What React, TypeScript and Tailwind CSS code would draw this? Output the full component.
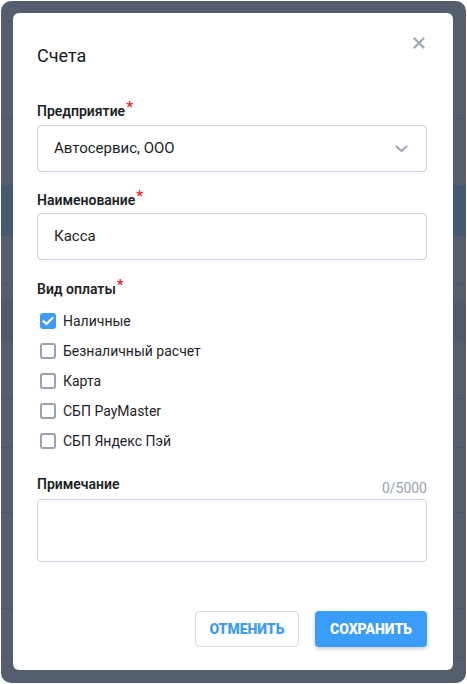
import React from "react";

const font = { fontFamily: "Roboto, 'Noto Sans', sans-serif" };

function Label({ text, required }: { text: string; required?: boolean }) {
  return (
    <div className="flex items-start h-[20px] text-[14px] font-semibold text-[#1b1f26] leading-[20px]">
      <span>{text}</span>
      {required && <span className="text-[#f5222d] text-[15px] leading-[12px] ml-[1px] font-bold">*</span>}
    </div>
  );
}

function Check({ label, checked }: { label: string; checked?: boolean }) {
  return (
    <div className="flex items-center h-[30px] pl-[3px]">
      {checked ? (
        <div className="w-[16px] h-[16px] rounded-[3px] bg-[#3d9bf6] flex items-center justify-center">
          <svg width="12" height="10" viewBox="0 0 12 10" fill="none">
            <path d="M1.5 5.2 L4.5 8 L10.5 2" stroke="white" strokeWidth="2.2" strokeLinecap="round" strokeLinejoin="round" />
          </svg>
        </div>
      ) : (
        <div className="w-[16px] h-[16px] rounded-[3px] border-2 border-[#9aa2ae] bg-white" />
      )}
      <span className="ml-[7px] text-[14px] text-[#1f2329]">{label}</span>
    </div>
  );
}

export default function App() {
  return (
    <div className="w-[467px] h-[684px] bg-white p-[1px]" style={font}>
      <div className="relative w-full h-full rounded-[10px] bg-[#545e6c] overflow-hidden p-[12px]">
        <div className="absolute left-0 right-0 top-[117px] h-px bg-[#4c5563]" />
        <div className="absolute left-0 right-0 top-[184px] h-[51px] bg-[#455a72]" />
        <div className="absolute left-0 right-0 top-[283px] h-px bg-[#4c5563]" />
        <div className="absolute left-0 right-0 top-[300px] h-[40px] bg-[#505a68]" />
        <div className="absolute left-0 right-0 top-[397px] h-px bg-[#4c5563]" />
        <div className="absolute left-0 right-0 top-[446px] h-px bg-[#4c5563]" />
        <div className="absolute left-0 right-0 top-[511px] h-px bg-[#4c5563]" />
        <div className="absolute left-0 right-0 top-[607px] h-px bg-[#4c5563]" />
        <div className="absolute left-0 right-0 top-[656px] h-px bg-[#4c5563]" />
        <div className="relative w-[440px] h-[657px] bg-white rounded-[6px] pl-[24px] pr-[26px] pt-[31px] flex flex-col">
          <div className="flex items-center justify-between h-[24px]">
            <div className="text-[18px] text-[#16191d] leading-[24px]">Счета</div>
            <svg width="12" height="12" viewBox="0 0 12 12" className="mr-[2px] -mt-[27px]">
              <path d="M1.5 1.5 L10.5 10.5 M10.5 1.5 L1.5 10.5" stroke="#a3aab6" strokeWidth="2.4" strokeLinecap="round" />
            </svg>
          </div>

          <div className="mt-[33px]">
            <Label text="Предприятие" required />
            <div className="mt-[4px] h-[47px] border border-[#c9d4e4] rounded-[4px] flex items-center justify-between pl-[16px] pr-[18px]">
              <span className="text-[15px] text-[#1b1f26]">Автосервис, ООО</span>
              <svg width="13" height="8" viewBox="0 0 13 8" fill="none">
                <path d="M1.5 1.5 L6.5 6 L11.5 1.5" stroke="#a3aab6" strokeWidth="2.2" strokeLinecap="round" strokeLinejoin="round" />
              </svg>
            </div>
          </div>

          <div className="mt-[18px]">
            <Label text="Наименование" required />
            <div className="mt-[3px] h-[47px] border border-[#c9d4e4] rounded-[4px] flex items-center pl-[16px]">
              <span className="text-[15px] text-[#1b1f26]">Касса</span>
            </div>
          </div>

          <div className="mt-[19px]">
            <Label text="Вид оплаты" required />
            <div className="mt-[7px] flex flex-col">
              <Check label="Наличные" checked />
              <Check label="Безналичный расчет" />
              <Check label="Карта" />
              <Check label="СБП PayMaster" />
              <Check label="СБП Яндекс Пэй" />
            </div>
          </div>

          <div className="mt-[18px]">
            <div className="flex items-end justify-between">
              <Label text="Примечание" />
              <span className="text-[14px] text-[#9aa2ae] leading-[16px] -mb-[2px]">0/5000</span>
            </div>
            <div className="mt-[5px] h-[63px] border border-[#c9d4e4] rounded-[4px]" />
          </div>

          <div className="mt-[49px] flex justify-end gap-[16px]">
            <button className="w-[104px] h-[36px] rounded-[4px] border border-[#d6dbe2] bg-white text-[#3d9bf6] text-[14px] font-black">
              ОТМЕНИТЬ
            </button>
            <button className="w-[112px] h-[36px] rounded-[4px] bg-[#3a9cfb] text-white text-[14px] font-black shadow-[0_2px_4px_rgba(0,0,0,0.2)]">
              СОХРАНИТЬ
            </button>
          </div>
        </div>
      </div>
    </div>
  );
}
